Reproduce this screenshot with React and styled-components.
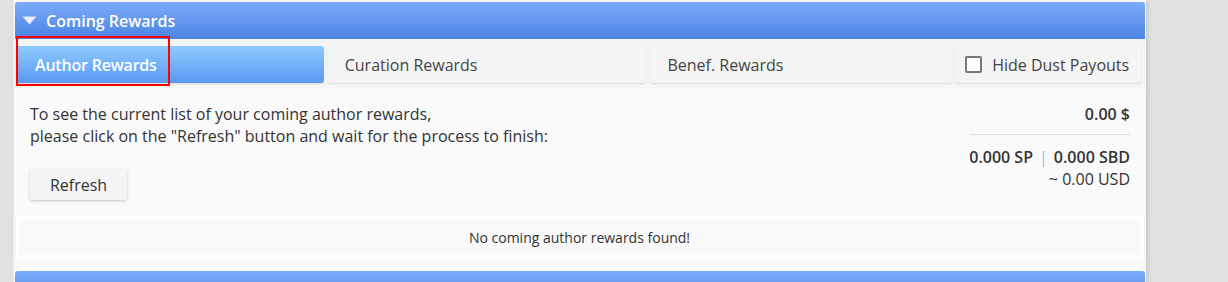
import React, { useState } from 'react';
import styled, { createGlobalStyle } from 'styled-components';

const GlobalStyle = createGlobalStyle`
  html, body {
    margin: 0;
    padding: 0;
    background: #e1e1e1;
    font-family: "Open Sans", "Noto Sans", sans-serif;
    color: #333;
  }
`;

const Page = styled.div`
  padding-left: 13px;
  height: 282px;
  overflow: hidden;
`;

const Panel = styled.div`
  width: 1133px;
  height: 300px;
  background: #f5f5f5;
  border-left: 1px solid #ececec;
  box-shadow: 2px 0 4px rgba(0, 0, 0, 0.12);
  box-sizing: border-box;
  padding: 2px 1px 0 1px;
`;

const Header = styled.div`
  display: flex;
  align-items: center;
  gap: 9px;
  height: 37px;
  padding-left: 7px;
  border-radius: 3px 3px 0 0;
  background: linear-gradient(#7babfa, #4c84e2);
  color: #fff;
  font-size: 16px;
  font-weight: 600;
  box-sizing: border-box;
`;

const Tabs = styled.div`
  display: flex;
  gap: 4px;
  padding: 7px 4px 0 1px;
`;

const Tab = styled.div`
  position: relative;
  display: flex;
  align-items: center;
  gap: 10px;
  height: 37px;
  width: ${(p) => p.w}px;
  padding-left: ${(p) => p.pl || 17}px;
  box-sizing: border-box;
  border-radius: 3px;
  font-size: 16px;
  cursor: pointer;
  box-shadow: 0 1px 2px rgba(0, 0, 0, 0.12);
  background: ${(p) => (p.active ? 'linear-gradient(#8ccbff, #5c98f2)' : '#f4f4f4')};
  color: ${(p) => (p.active ? '#fff' : '#444')};
  font-weight: ${(p) => (p.active ? 600 : 400)};
  letter-spacing: ${(p) => (p.active ? '-0.2px' : '0')};
`;

const Highlight = styled.div`
  position: absolute;
  left: 0;
  top: -10px;
  width: 154px;
  height: 50px;
  border: 2px solid #f00;
  box-sizing: border-box;
  pointer-events: none;
`;

const Check = styled.span`
  width: 13px;
  height: 13px;
  border: 2px solid #777;
  border-radius: 2px;
  background: #fff;
`;

const Content = styled.div`
  display: flex;
  justify-content: space-between;
  margin-top: 6px;
  background: #fafafa;
  padding: 14px 14px 12px 15px;
  height: 127px;
  box-sizing: border-box;
`;

const Intro = styled.div`
  font-size: 16px;
  line-height: 22px;
`;

const RefreshButton = styled.button`
  margin-top: 22px;
  width: 97px;
  height: 31px;
  border: none;
  border-radius: 2px;
  background: #f4f4f4;
  box-shadow: 0 1px 3px rgba(0, 0, 0, 0.22);
  font-family: inherit;
  font-size: 16px;
  color: #333;
`;

const Totals = styled.div`
  display: flex;
  flex-direction: column;
  align-items: flex-end;
  font-size: 16px;
  padding-right: 1px;
`;

const Amount = styled.div`
  font-weight: 600;
  line-height: 22px;
`;

const Rule = styled.div`
  width: 160px;
  height: 1px;
  background: #ddd;
  margin: 9px 0 11px;
`;

const Sep = styled.span`
  color: #9bb8e0;
  font-weight: 400;
  margin: 0 6px;
`;

const Usd = styled.div`
  line-height: 22px;
`;

const Empty = styled.div`
  margin: 0 1px;
  border: 4px solid #fff;
  border-left-width: 3px;
  background: #f9f9f9;
  height: 43px;
  box-sizing: border-box;
  display: flex;
  align-items: center;
  justify-content: center;
  font-size: 14px;
  background-clip: padding-box;
`;

const Spacer = styled.div`
  height: 12px;
  background: #fafafa;
`;

const Triangle = () => (
  <svg width="15" height="9" viewBox="0 0 15 9">
    <path d="M0.5 0.5 L14.5 0.5 L7.5 8.5 Z" fill="#e6ebf5" />
  </svg>
);

export default function App() {
  const [hideDust, setHideDust] = useState(false);
  return (
    <Page>
      <GlobalStyle />
      <Panel>
        <Header>
          <Triangle />
          Coming Rewards
        </Header>
        <Tabs>
          <Tab active w={308} pl={19}>
            Author Rewards
            <Highlight />
          </Tab>
          <Tab w={319}>Curation Rewards</Tab>
          <Tab w={302}>Benef. Rewards</Tab>
          <Tab w={185} pl={9} onClick={() => setHideDust(!hideDust)}>
            <Check />
            Hide Dust Payouts
          </Tab>
        </Tabs>
        <Content>
          <Intro>
            To see the current list of your coming author rewards,
            <br />
            please click on the "Refresh" button and wait for the process to finish:
            <br />
            <RefreshButton>Refresh</RefreshButton>
          </Intro>
          <Totals>
            <Amount>0.00 $</Amount>
            <Rule />
            <Amount>
              0.000 SP<Sep>|</Sep>0.000 SBD
            </Amount>
            <Usd>~ 0.00 USD</Usd>
          </Totals>
        </Content>
        <Empty>No coming author rewards found!</Empty>
        <Spacer />
        <Header />
      </Panel>
    </Page>
  );
}
